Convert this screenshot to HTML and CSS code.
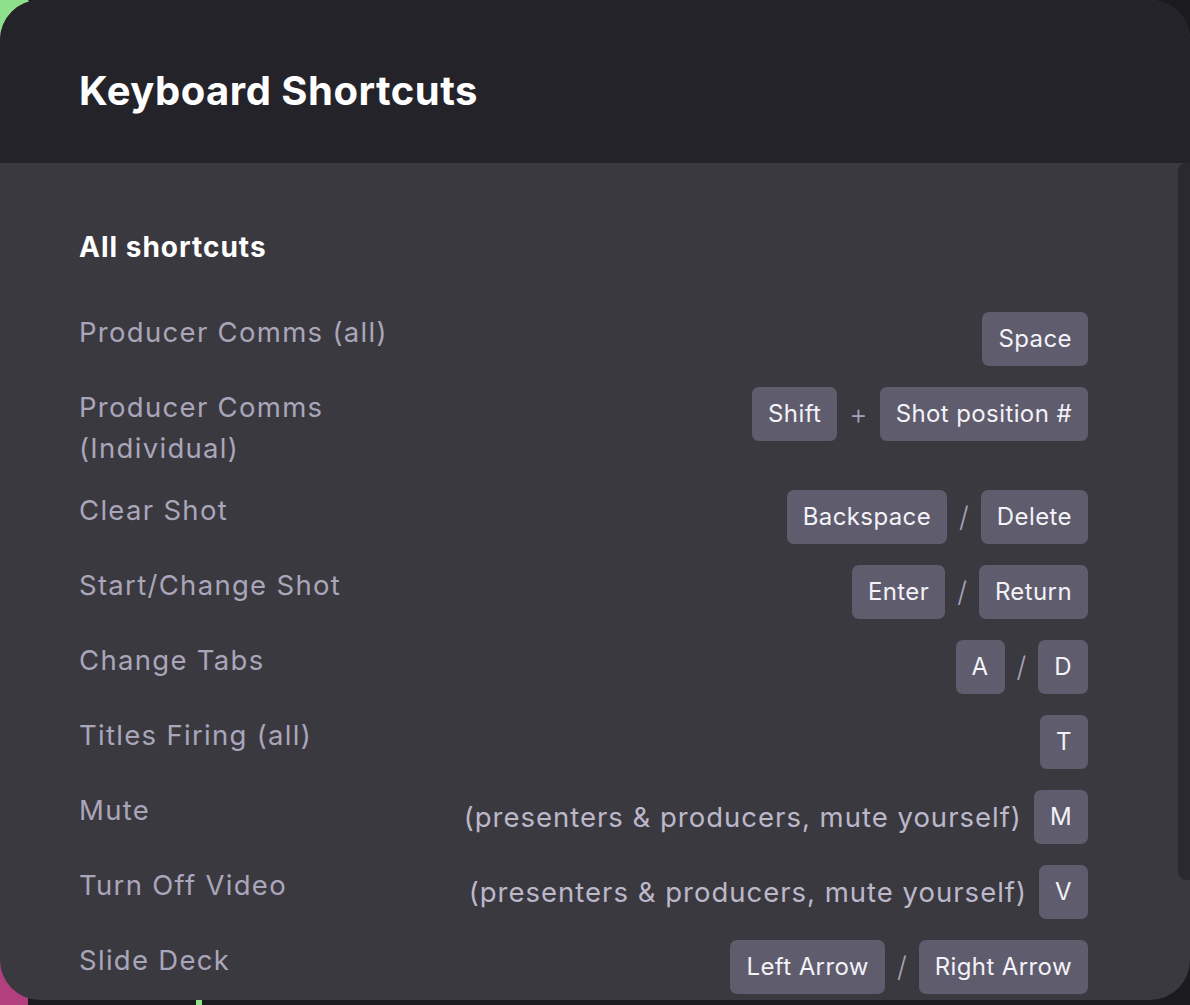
FILE: index.html
```html
<!DOCTYPE html>
<html lang="en">
<head>
  <meta charset="UTF-8">
  <meta name="viewport" content="width=device-width, initial-scale=1.0">
  <title>Keyboard Shortcuts</title>
  <link rel="stylesheet" href="styles.css">
</head>
<body>
  <div class="behind-green"></div>
  <div class="behind-pink"></div>
  <div class="behind-tick"></div>

  <div class="modal">
    <div class="modal-header">
      <h1 class="title">Keyboard Shortcuts</h1>
    </div>

    <div class="modal-body">
      <h2 class="section-title">All shortcuts</h2>

      <div class="shortcut">
        <div class="label">Producer Comms (all)</div>
        <div class="keys">
          <span class="key">Space</span>
        </div>
      </div>

      <div class="shortcut">
        <div class="label">Producer Comms (Individual)</div>
        <div class="keys">
          <span class="key">Shift</span>
          <span class="sep">+</span>
          <span class="key">Shot position #</span>
        </div>
      </div>

      <div class="shortcut">
        <div class="label">Clear Shot</div>
        <div class="keys">
          <span class="key">Backspace</span>
          <span class="sep">/</span>
          <span class="key">Delete</span>
        </div>
      </div>

      <div class="shortcut">
        <div class="label">Start/Change Shot</div>
        <div class="keys">
          <span class="key">Enter</span>
          <span class="sep">/</span>
          <span class="key">Return</span>
        </div>
      </div>

      <div class="shortcut">
        <div class="label">Change Tabs</div>
        <div class="keys">
          <span class="key">A</span>
          <span class="sep">/</span>
          <span class="key">D</span>
        </div>
      </div>

      <div class="shortcut">
        <div class="label">Titles Firing (all)</div>
        <div class="keys">
          <span class="key">T</span>
        </div>
      </div>

      <div class="shortcut">
        <div class="label">Mute</div>
        <div class="keys">
          <span class="note">(presenters &amp; producers, mute yourself)</span>
          <span class="key">M</span>
        </div>
      </div>

      <div class="shortcut">
        <div class="label">Turn Off Video</div>
        <div class="keys">
          <span class="note">(presenters &amp; producers, mute yourself)</span>
          <span class="key">V</span>
        </div>
      </div>

      <div class="shortcut">
        <div class="label">Slide Deck</div>
        <div class="keys">
          <span class="key">Left Arrow</span>
          <span class="sep">/</span>
          <span class="key">Right Arrow</span>
        </div>
      </div>
    </div>

    <div class="scrollbar"></div>
  </div>
</body>
</html>
```

FILE: styles.css
```css
* {
  margin: 0;
  padding: 0;
  box-sizing: border-box;
}

body {
  width: 1190px;
  height: 1005px;
  overflow: hidden;
  position: relative;
  background-color: #1b1b1e;
  font-family: "Inter", "Noto Sans", sans-serif;
}

/* bits of the page under the modal */
.behind-green {
  position: absolute;
  top: -20px;
  left: -30px;
  width: 60px;
  height: 60px;
  border-radius: 50%;
  background-color: #8fe08a;
}

.behind-pink {
  position: absolute;
  top: 950px;
  left: -12px;
  width: 40px;
  height: 60px;
  background-color: #b3407e;
}

.behind-tick {
  position: absolute;
  top: 998px;
  left: 196px;
  width: 6px;
  height: 7px;
  background-color: #8fe08a;
}

.modal {
  position: relative;
  height: 1000px;
  border-radius: 40px;
  overflow: hidden;
  background-color: #3b3940;
}

.modal-header {
  height: 163px;
  padding: 18px 0 0 79px;
  display: flex;
  align-items: center;
  background-color: #24232a;
}

.title {
  font-size: 40px;
  font-weight: 700;
  color: #ffffff;
  letter-spacing: 0.5px;
}

.modal-body {
  padding: 64px 102px 0 79px;
}

.section-title {
  font-size: 28px;
  line-height: 40px;
  font-weight: 700;
  color: #ffffff;
  letter-spacing: 1px;
  margin-bottom: 45px;
}

.shortcut {
  display: flex;
  justify-content: space-between;
  align-items: flex-start;
  margin-bottom: 21px;
}

.label {
  width: 320px;
  flex-shrink: 0;
  font-size: 27.5px;
  line-height: 41px;
  letter-spacing: 1.3px;
  color: #aaa6ba;
}

.keys {
  display: flex;
  align-items: center;
}

.key {
  height: 54px;
  line-height: 54px;
  padding: 0 16px;
  border-radius: 7px;
  background-color: #5f5c6e;
  color: #f3f2f7;
  font-size: 24px;
  letter-spacing: 0.4px;
  white-space: nowrap;
}

.sep {
  margin: 0 12px;
  font-size: 28px;
  font-weight: 300;
  color: #a7a3b6;
}

.note {
  margin-right: 12px;
  font-size: 27.5px;
  letter-spacing: 1px;
  color: #bcb8ca;
  white-space: nowrap;
}

.scrollbar {
  position: absolute;
  top: 163px;
  right: 0;
  width: 12px;
  height: 717px;
  border-radius: 8px 0 0 8px;
  background-color: #2a292f;
}
```
